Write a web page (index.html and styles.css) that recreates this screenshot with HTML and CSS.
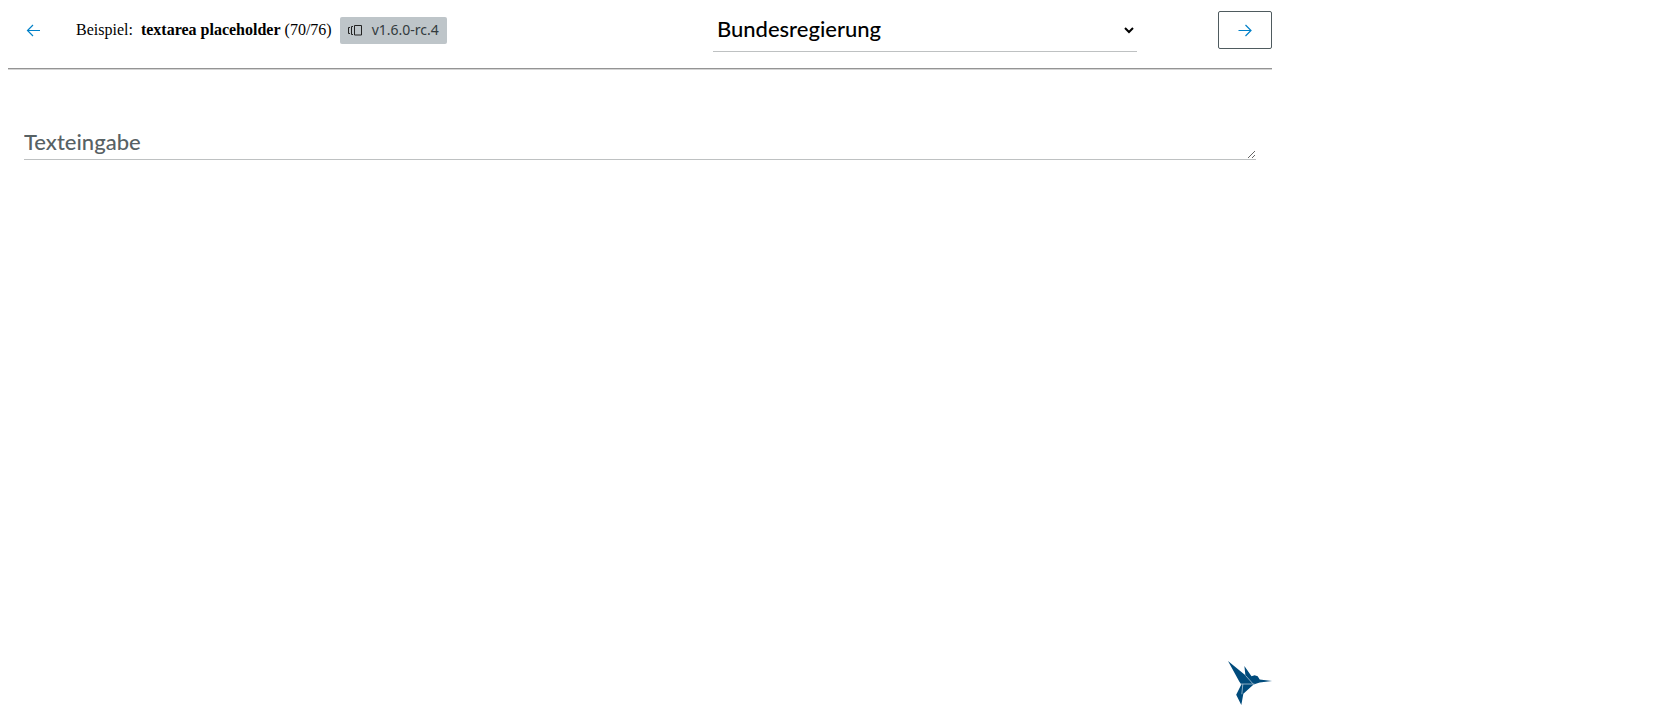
FILE: index.html
```
<!DOCTYPE html>
<html lang="de">
<head>
<meta charset="utf-8">
<meta name="viewport" content="width=device-width, initial-scale=1">
<title>textarea placeholder</title>
<link rel="stylesheet" href="styles.css">
</head>
<body>
<div class="page">
  <header class="toolbar">
    <div class="toolbar-start">
      <button class="nav-button" type="button" aria-label="Zurück">
        <svg class="arrow" viewBox="0 0 14 12"><path d="M13 6.500H.8M6 1 .5 6.500 6 12"/></svg>
      </button>
      <div class="example">
        <span>Beispiel:</span>
        <span><b>textarea placeholder</b> (70/76)</span>
        <span class="version">
          <svg class="version-icon" viewBox="0 0 15 11"><path d="M2 2.500H.5v6H2M5 1.500H3.500v8H5M6.500.5h7v9.500h-7z"/></svg>
          v1.6.0-rc.4
        </span>
      </div>
    </div>
    <div class="toolbar-end">
      <div class="theme">
        <select class="theme-select" aria-label="Thema">
          <option>Bundesregierung</option>
        </select>
        <svg class="chevron" viewBox="0 0 10 7"><path d="M1 1l4 4 4-4"/></svg>
      </div>
      <button class="nav-button nav-button-outlined" type="button" aria-label="Weiter">
        <svg class="arrow" viewBox="0 0 14 12"><path d="M.5 6.500h12.200M7.500 1 13 6.500 7.500 12"/></svg>
      </button>
    </div>
  </header>
  <hr class="divider">
  <main class="content">
    <textarea class="text-input" rows="1" placeholder="Texteingabe" aria-label="Texteingabe"></textarea>
  </main>
  <footer class="footer">
    <svg class="bird" viewBox="0 0 43 43">
      <path class="bird-body" d="M0 0 17 14 16 5 23 15 26 14 29 15 31 18 43 19.500 31 21 25 23 15 32 13 43 8 33 13 23 11 20Z"/>
      <path class="bird-line" d="M12 22.500h14M14.500 22.500l-1 10M17 14l8 9"/>
    </svg>
  </footer>
</div>
</body>
</html>
```
FILE: styles.css
```
* {
  box-sizing: border-box;
}

body {
  margin: 0;
  background: #fff;
  color: #000;
  font: 16px/24px "Liberation Serif", "Times New Roman", serif;
}

.page {
  display: flex;
  flex-direction: column;
  max-width: 1280px;
  min-height: 100vh;
  padding: 11px 8px 15px;
}

.toolbar {
  display: grid;
  grid-template-columns: 5fr 4fr;
  align-items: start;
  column-gap: 6px;
}

.toolbar-start,
.example,
.version {
  display: flex;
  align-items: center;
}

.toolbar-start {
  gap: 16px;
}

.toolbar-end {
  display: flex;
  align-items: flex-start;
  justify-content: space-between;
}

.example {
  gap: 8px;
  white-space: nowrap;
}

.nav-button {
  display: flex;
  align-items: center;
  justify-content: center;
  width: 52px;
  height: 38px;
  padding: 0;
  border: 1px solid transparent;
  border-radius: 2px;
  background: none;
}

.nav-button-outlined {
  width: 54px;
  border-color: #4f5b5f;
}

.arrow {
  width: 14px;
  height: 12px;
  overflow: visible;
  fill: none;
  stroke: #0080c8;
  stroke-width: 1.2;
}

.version {
  gap: 9px;
  height: 27px;
  padding: 0 8px;
  border-radius: 2px;
  background: #bec5c9;
  color: #333b3e;
  font: 14px/24px "Noto Sans", sans-serif;
}

.version-icon {
  width: 15px;
  height: 11px;
  fill: none;
  stroke: #222;
}

.theme {
  position: relative;
  flex: 0 1 424px;
}

.theme-select {
  display: block;
  width: 100%;
  height: 41px;
  padding: 0 24px 4px 4px;
  border: 0;
  border-bottom: 1px solid #bec1c2;
  border-radius: 0;
  appearance: none;
  background: transparent;
  color: #000;
  font: 500 22px/32px Lato, "Noto Sans", sans-serif;
}

.chevron {
  position: absolute;
  top: 16px;
  right: 3px;
  width: 10px;
  height: 7px;
  fill: none;
  stroke: #000;
  stroke-width: 2;
  pointer-events: none;
}

.divider {
  width: 100%;
  margin: 16px 0 0;
  border: 0;
  border-top: 1px solid #949494;
  border-bottom: 1px solid #d4d4d4;
}

.content {
  flex: 1;
  padding: 54px 16px 0;
}

.text-input {
  display: block;
  width: 100%;
  height: 36px;
  padding: 0;
  border: 0;
  border-bottom: 1px solid #bec1c2;
  background: transparent;
  color: #000;
  font: 500 22px/35px Lato, "Noto Sans", sans-serif;
  resize: vertical;
  overflow: hidden;
}

.text-input::placeholder {
  color: #576164;
  opacity: 1;
}

.footer {
  display: flex;
  justify-content: flex-end;
}

.bird {
  width: 44px;
  height: 44px;
}

.bird-body {
  fill: #004b7c;
}

.bird-line {
  fill: none;
  stroke: #a9c3d5;
  stroke-width: 0.8;
}
```
